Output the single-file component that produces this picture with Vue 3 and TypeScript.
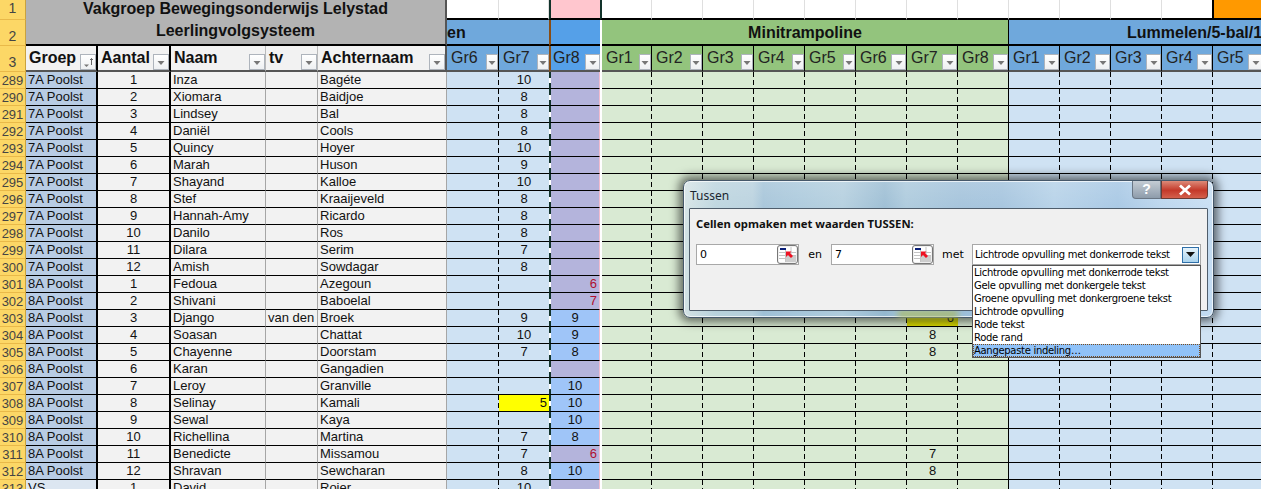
<script setup lang="ts">
interface Row {
  n: number
  groep: string
  a: number
  naam: string
  tv?: string
  achter: string
  g7?: number
  g7y?: boolean
  g8?: number
  red?: boolean
  m7?: number
  my?: boolean
}
const p7 = '7A Poolst'
const p8 = '8A Poolst'
const rows: Row[] = [
  { n: 289, groep: p7, a: 1, naam: 'Inza', achter: 'Bagéte', g7: 10 },
  { n: 290, groep: p7, a: 2, naam: 'Xiomara', achter: 'Baidjoe', g7: 8 },
  { n: 291, groep: p7, a: 3, naam: 'Lindsey', achter: 'Bal', g7: 8 },
  { n: 292, groep: p7, a: 4, naam: 'Daniël', achter: 'Cools', g7: 8 },
  { n: 293, groep: p7, a: 5, naam: 'Quincy', achter: 'Hoyer', g7: 10 },
  { n: 294, groep: p7, a: 6, naam: 'Marah', achter: 'Huson', g7: 9 },
  { n: 295, groep: p7, a: 7, naam: 'Shayand', achter: 'Kalloe', g7: 10 },
  { n: 296, groep: p7, a: 8, naam: 'Stef', achter: 'Kraaijeveld', g7: 8 },
  { n: 297, groep: p7, a: 9, naam: 'Hannah-Amy', achter: 'Ricardo', g7: 8 },
  { n: 298, groep: p7, a: 10, naam: 'Danilo', achter: 'Ros', g7: 8 },
  { n: 299, groep: p7, a: 11, naam: 'Dilara', achter: 'Serim', g7: 7 },
  { n: 300, groep: p7, a: 12, naam: 'Amish', achter: 'Sowdagar', g7: 8 },
  { n: 301, groep: p8, a: 1, naam: 'Fedoua', achter: 'Azegoun', g8: 6, red: true },
  { n: 302, groep: p8, a: 2, naam: 'Shivani', achter: 'Baboelal', g8: 7, red: true },
  { n: 303, groep: p8, a: 3, naam: 'Django', tv: 'van den', achter: 'Broek', g7: 9, g8: 9, m7: 6, my: true },
  { n: 304, groep: p8, a: 4, naam: 'Soasan', achter: 'Chattat', g7: 10, g8: 9, m7: 8 },
  { n: 305, groep: p8, a: 5, naam: 'Chayenne', achter: 'Doorstam', g7: 7, g8: 8, m7: 8 },
  { n: 306, groep: p8, a: 6, naam: 'Karan', achter: 'Gangadien' },
  { n: 307, groep: p8, a: 7, naam: 'Leroy', achter: 'Granville', g8: 10 },
  { n: 308, groep: p8, a: 8, naam: 'Selinay', achter: 'Kamali', g7: 5, g7y: true, g8: 10 },
  { n: 309, groep: p8, a: 9, naam: 'Sewal', achter: 'Kaya', g8: 10 },
  { n: 310, groep: p8, a: 10, naam: 'Richellina', achter: 'Martina', g7: 7, g8: 8 },
  { n: 311, groep: p8, a: 11, naam: 'Benedicte', achter: 'Missamou', g7: 7, g8: 6, red: true, m7: 7 },
  { n: 312, groep: p8, a: 12, naam: 'Shravan', achter: 'Sewcharan', g7: 8, g8: 10, m7: 8 },
  { n: 313, groep: 'VS', a: 1, naam: 'David', achter: 'Rojer', g7: 10 }
]
const mini = ['Gr1', 'Gr2', 'Gr3', 'Gr4', 'Gr5', 'Gr6', 'Gr7', 'Gr8']
const lumm = ['Gr1', 'Gr2', 'Gr3', 'Gr4', 'Gr5']
const leftHead = ['Groep', 'Aantal', 'Naam', 'tv', 'Achternaam']
const options = [
  'Lichtrode opvulling met donkerrode tekst',
  'Gele opvulling met donkergele tekst',
  'Groene opvulling met donkergroene tekst',
  'Lichtrode opvulling',
  'Rode tekst',
  'Rode rand',
  'Aangepaste indeling…'
]
</script>

<template>
  <div class="sheet">
    <div class="rn r1">1</div>
    <div class="title">
      <span>Vakgroep Bewegingsonderwijs Lelystad</span>
      <span>Leerlingvolgsysteem</span>
    </div>
    <div class="blank" />
    <div class="blank" />
    <div class="pink" />
    <div class="mark" />
    <div v-for="i in 8" :key="'t' + i" class="blank" />
    <div v-for="i in 4" :key="'u' + i" class="blank" />
    <div class="orange" />

    <div class="rn r2">2</div>
    <div class="band blue left-band"><b>en</b></div>
    <div class="band brightblue" />
    <div class="gap-w" />
    <div class="band green"><b>Minitrampoline</b></div>
    <div class="band blue lumm"><b>Lummelen/5-bal/1</b></div>

    <div class="rn r3">3</div>
    <div v-for="(h, i) in leftHead" :key="h" class="lh" :class="'lh' + i">
      <b>{{ h }}</b>
      <span class="fb wide">
        <svg v-if="i === 0" width="14" height="14" viewBox="0 0 14 14"><path d="M3 9.5h5L5.5 12z" fill="#777" /><path d="M10.5 10V3.5M9 5l1.5-1.5L12 5" fill="none" stroke="#666" /></svg>
        <svg v-else width="10" height="14" viewBox="0 0 10 14"><path d="M1.5 6h7L5 10z" fill="#777" /></svg>
      </span>
    </div>
    <div v-for="g in ['Gr6', 'Gr7']" :key="'a' + g" class="gh ghb" :class="{ nob: g === 'Gr7' }">
      <span>{{ g }}</span><span class="fb"><svg width="10" height="14" viewBox="0 0 10 14"><path d="M1.5 6h7L5 10z" fill="#777" /></svg></span>
    </div>
    <div class="gh ghbb"><span>Gr8</span><span class="fb wide"><svg width="10" height="14" viewBox="0 0 10 14"><path d="M1.5 6h7L5 10z" fill="#777" /></svg></span></div>
    <div class="gap-w" />
    <div v-for="(g, i) in mini" :key="'m' + g" class="gh ghg">
      <span>{{ g }}</span><span class="fb" :class="{ wide: i > 4 }"><svg width="10" height="14" viewBox="0 0 10 14"><path d="M1.5 6h7L5 10z" fill="#777" /></svg></span>
    </div>
    <div v-for="g in lumm" :key="'l' + g" class="gh ghb">
      <span>{{ g }}</span><span class="fb wide"><svg width="10" height="14" viewBox="0 0 10 14"><path d="M1.5 6h7L5 10z" fill="#777" /></svg></span>
    </div>

    <template v-for="r in rows" :key="r.n">
      <div class="rn">{{ r.n }}</div>
      <div class="c groep" :class="{ vs: r.groep === 'VS' }">{{ r.groep }}</div>
      <div class="c grey mid thick">{{ r.a }}</div>
      <div class="c grey">{{ r.naam }}</div>
      <div class="c grey">{{ r.tv }}</div>
      <div class="c grey">{{ r.achter }}</div>
      <div class="c lb dash" />
      <div class="c lb mid" :class="{ yellow: r.g7y, rgt: r.g7y }">{{ r.g7 }}</div>
      <div class="c g8" :class="[r.g8 && !r.red ? 'g8b' : 'g8p', { rgt: r.red }]">{{ r.g8 }}</div>
      <div class="gap-w" />
      <div v-for="i in 8" :key="i" class="c lg mid" :class="i === 8 ? 'solid' : 'dash'">
        <span v-if="i === 7 && r.my" class="dy">{{ r.m7 }}</span>
        <template v-else-if="i === 7">{{ r.m7 }}</template>
      </div>
      <div v-for="i in 5" :key="'x' + i" class="c lb dash" />
    </template>

    <div class="dialog">
      <span class="glow" />
      <div class="titlebar">
        <span class="dtitle">Tussen</span>
        <div class="winbtns">
          <span class="help">?</span>
          <span class="close">
            <svg width="16" height="12" viewBox="0 0 16 12"><path d="M3 1.5l10 9M13 1.5l-10 9" stroke="#fff" stroke-width="2.8" /></svg>
          </span>
        </div>
      </div>
      <div class="dbody">
        <p class="dhead">Cellen opmaken met waarden TUSSEN:</p>
        <div class="dform">
          <div class="input">
            <span>0</span>
            <span class="refbtn">
              <svg width="19" height="17" viewBox="0 0 19 17"><rect x="1" y="1" width="17" height="15" fill="#fff" /><path d="M1 6.5h17M1 9.5h17M1 12.5h17M7.5 4v12M13 1v15" stroke="#c4c4c4" /><rect x="8" y="10" width="10" height="6" fill="#cdcdcd" /><rect x="2" y="2" width="6" height="2" fill="#0a1f78" /><path d="M8 5.5h5.5l-1.5 1.5 3 3-2 2-3-3-2 2z" fill="#ee1122" /></svg>
            </span>
          </div>
          <span class="lbl en">en</span>
          <div class="input">
            <span>7</span>
            <span class="refbtn">
              <svg width="19" height="17" viewBox="0 0 19 17"><rect x="1" y="1" width="17" height="15" fill="#fff" /><path d="M1 6.5h17M1 9.5h17M1 12.5h17M7.5 4v12M13 1v15" stroke="#c4c4c4" /><rect x="8" y="10" width="10" height="6" fill="#cdcdcd" /><rect x="2" y="2" width="6" height="2" fill="#0a1f78" /><path d="M8 5.5h5.5l-1.5 1.5 3 3-2 2-3-3-2 2z" fill="#ee1122" /></svg>
            </span>
          </div>
          <span class="lbl met">met</span>
          <div class="combo">
            <div class="combohead">
              <span>{{ options[0] }}</span>
              <span class="cbtn"><svg width="9" height="5" viewBox="0 0 9 5"><path d="M0 0h9L4.5 5z" fill="#111" /></svg></span>
            </div>
            <ul class="list">
              <li v-for="(o, i) in options" :key="o" :class="{ sel: i === options.length - 1 }">{{ o }}</li>
            </ul>
          </div>
        </div>
      </div>
    </div>
  </div>
</template>

<style>
html, body { margin: 0; background: #fff; overflow: hidden; }
</style>

<style scoped>
.sheet {
  position: relative;
  width: 1261px;
  height: 489px;
  overflow: hidden;
  display: grid;
  grid-template-columns: 26px 72px 73px 95px 52px 129px 52px 50px 51px 2px 50px repeat(7, 51px) repeat(5, 51px);
  grid-template-rows: 20px 26px 26px repeat(25, 17px);
  font: 13px/16px "Liberation Sans", Arial, sans-serif;
  color: #111;
  background: #fff;
}
.rn {
  box-sizing: border-box;
  background: #fcd766;
  border-bottom: 1px solid #e9b949;
  border-right: 1px solid #c9a23e;
  text-align: center;
  font-size: 13px;
  line-height: 17px;
  color: #444;
  overflow: hidden;
}
.r1, .r2, .r3 { font-size: 14px; }
.r2, .r3 { line-height: 32px; }
.title {
  grid-column: 2 / 7;
  grid-row: 1 / 3;
  box-sizing: border-box;
  background: #b3b3b3;
  border-right: 2px solid #555;
  border-bottom: 2px solid #000;
  padding-bottom: 4px;
  display: flex;
  flex-direction: column;
  align-items: center;
  justify-content: center;
  font-weight: 700;
  font-size: 16px;
  line-height: 22px;
}
.blank {
  box-sizing: border-box;
  border-right: 1px solid #dfdfdf;
  border-bottom: 2px solid #000;
}
.pink { background: #ffc6ce; border-left: 2px solid #12332b; border-bottom: 2px solid #000; box-sizing: border-box; }
.mark { box-sizing: border-box; border-left: 2px solid #12332b; border-bottom: 2px solid #000; }
.orange { background: #ff9900; border-left: 2px solid #000; border-bottom: 2px solid #000; box-sizing: border-box; margin-left: -1px; }
.band {
  box-sizing: border-box;
  border-bottom: 2px solid #000;
  font-size: 16px;
  line-height: 25px;
}
.band b { font-weight: 700; }
.left-band { grid-column: 7 / 9; }
.blue { background: #6fa8dc; }
.brightblue { background: #55a0e8; grid-column: 9; border-left: 2px solid #8a4d14; }
.green { background: #93c47d; grid-column: 11 / 19; text-align: center; border-right: 1px solid #000; }
.lumm { grid-column: 19 / 24; padding-left: 118px; white-space: nowrap; overflow: hidden; }
.gap-w { background: #fff; }
.lh {
  box-sizing: border-box;
  background: #f2f2f2;
  border-bottom: 2px solid #555;
  display: flex;
  justify-content: space-between;
  align-items: center;
  font-size: 16px;
  padding-left: 3px;
}
.lh0, .lh1 { border-right: 2px solid #000; }
.lh2, .lh3 { border-right: 1px solid #bbb; }
.lh4 { border-right: 2px solid #555; }
.gh {
  box-sizing: border-box;
  display: flex;
  justify-content: space-between;
  align-items: center;
  font-size: 16px;
  padding-left: 4px;
  border-right: 1px solid #000;
  border-bottom: 2px solid #555;
  color: #222;
}
.nob { border-right: 0; }
.ghb { background: #6fa8dc; }
.ghbb { background: #55a0e8; border-left: 2px solid #8a4d14; padding-left: 2px; border-right: 0; }
.ghg { background: #93c47d; }
.fb {
  box-sizing: border-box;
  width: 12px;
  height: 16px;
  margin-top: 7px;
  border: 1px solid #aeb4bc;
  background: linear-gradient(#fff, #eef0f2);
  display: flex;
  align-items: center;
  justify-content: center;
  flex: none;
}
.fb.wide { width: 15px; }
.lh .fb.wide { width: 16px; }
.c {
  box-sizing: border-box;
  border-bottom: 1px solid #000;
  padding: 0 2px;
  line-height: 16px;
  white-space: nowrap;
  overflow: hidden;
}
.groep { background: #b8cce4; border-right: 2px solid #000; }
.vs { background: #dce6f1; }
.grey { background: #f2f2f2; border-right: 1px solid #a6a6a6; }
.thick { border-right: 2px solid #000; }
.mid { text-align: center; }
.lb { background-color: #cfe2f3; }
.lg { background-color: #d9ead3; position: relative; }
.dash {
  background-image: repeating-linear-gradient(#000 0 5px, transparent 5px 8px);
  background-size: 1px 100%;
  background-position: right top;
  background-repeat: no-repeat;
}
.solid { border-right: 1px solid #000; }
.yellow { background-color: #ffff00; }
.dy {
  position: absolute;
  inset: 0;
  padding-right: 4px;
  text-align: right;
  background: #dcdc00;
}
.rgt { text-align: right; }
.g8 {
  border-left: 2px dashed #12332b;
  border-right: 1px solid #f2bcd0;
  background-clip: padding-box;
  text-align: center;
}
.g8b { background-color: #9fc5f8; }
.g8p { background-color: #b4b4dc; }
.g8.rgt { text-align: right; color: #b01030; }
.dialog {
  position: absolute;
  left: 683px;
  top: 180px;
  box-sizing: border-box;
  width: 531px;
  height: 138px;
  padding: 0 5px;
  border: 1px solid #46586a;
  border-radius: 7px;
  background:
    linear-gradient(rgba(255, 255, 255, 0.22), rgba(255, 255, 255, 0) 40%),
    linear-gradient(90deg, #d3e2e4 0%, #b8d2dc 6%, #b4cedc 13%, #9fc0d6 15%, #a6c6da 22%, #aecbdc 30%, #94b8d0 38%, #a6c6da 42%, #9cbed8 52%, #9dbfdb 60%, #b0cee6 70%, #a0c3e2 82%, #b5d2ec 90%, #c4dcf2 100%);
  box-shadow: 0 0 10px 4px rgba(0, 0, 0, 0.55), inset 0 0 0 1px rgba(255, 255, 255, 0.7);
  font: 11px/15px "DejaVu Sans", sans-serif;
}
.glow {
  position: absolute;
  left: 214px;
  bottom: 0;
  width: 60px;
  height: 6px;
  background: #a9b860;
  filter: blur(3px);
}
.titlebar {
  height: 27px;
  position: relative;
  display: flex;
  align-items: center;
}
.dtitle { font: 12px/15px "Noto Sans", sans-serif; color: #1a2530; margin: 2px 0 0 1px; }
.winbtns {
  position: absolute;
  right: 0;
  top: 0;
  display: flex;
  height: 18px;
}
.help {
  box-sizing: border-box;
  width: 29px;
  border: 1px solid #6a7684;
  border-top: 0;
  border-radius: 0 0 0 4px;
  background: linear-gradient(#c4ccd4, #8e9cab);
  color: #fff;
  text-align: center;
  font: 700 14px/17px "Liberation Sans", sans-serif;
}
.close {
  box-sizing: border-box;
  width: 47px;
  border: 1px solid #6b3a34;
  border-top: 0;
  border-radius: 0 0 4px 0;
  background: linear-gradient(#dd8a78, #c4392a 55%, #d4604c);
  display: flex;
  align-items: center;
  justify-content: center;
}
.dbody {
  position: relative;
  box-sizing: border-box;
  height: 103px;
  background: #f0f0f0;
  border: 1px solid #4f5d6b;
  border-radius: 1px;
  padding: 6px 6px 0;
  color: #000;
}
.dhead { margin: 0; font: 700 11.3px/17px "Noto Sans", sans-serif; color: #111; }
.dform { display: flex; align-items: flex-start; margin-top: 12px; }
.input {
  box-sizing: border-box;
  width: 103px;
  height: 21px;
  background: #fff;
  border: 1px solid #a8a8a8;
  display: flex;
  justify-content: space-between;
  align-items: center;
  padding-left: 3px;
}
.refbtn {
  box-sizing: border-box;
  width: 21px;
  height: 19px;
  border: 1px solid #777;
  border-radius: 3px;
  background: #efefef;
  display: flex;
  align-items: center;
  justify-content: center;
  flex: none;
}
.lbl { line-height: 21px; text-align: center; }
.en { width: 32px; }
.met { width: 38px; }
.combo { position: relative; width: 229px; }
.combohead {
  box-sizing: border-box;
  height: 21px;
  background: #fff;
  border: 1px solid #a8a8a8;
  display: flex;
  align-items: center;
  justify-content: space-between;
  padding: 0 1px 0 2px;
  font-size: 10px;
  letter-spacing: -0.3px;
  white-space: nowrap;
}
.cbtn {
  box-sizing: border-box;
  width: 17px;
  height: 16px;
  border: 1px solid #2f6fa8;
  background: linear-gradient(#e6f3fb, #a9d3ee);
  display: flex;
  align-items: center;
  justify-content: center;
}
.list {
  position: absolute;
  left: 0;
  top: 21px;
  width: 229px;
  box-sizing: border-box;
  margin: 0;
  padding: 0;
  list-style: none;
  background: #fff;
  border: 1px solid #555;
  font-size: 10px;
  letter-spacing: -0.3px;
  line-height: 13px;
  white-space: nowrap;
  z-index: 2;
}
.list li { padding-left: 1px; }
.list li.sel { background: #90c2f8; outline: 1px dotted #7a4b1c; outline-offset: -1px; }
</style>
